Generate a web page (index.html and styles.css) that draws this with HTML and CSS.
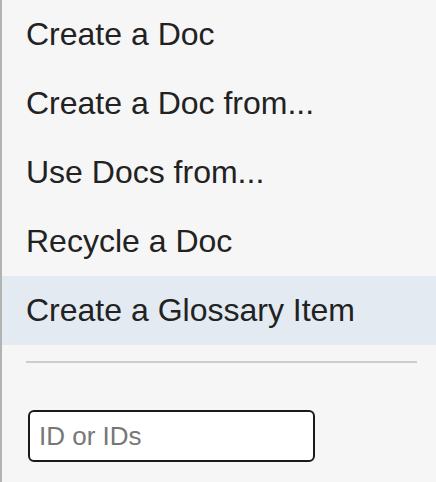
FILE: index.html
```html
<!DOCTYPE html>
<html>
<head>
<meta charset="utf-8">
<link rel="stylesheet" href="styles.css">
</head>
<body>
<div class="menu">
  <ul class="items">
    <li class="item">Create a Doc</li>
    <li class="item">Create a Doc from...</li>
    <li class="item">Use Docs from...</li>
    <li class="item">Recycle a Doc</li>
    <li class="item active">Create a Glossary Item</li>
  </ul>
  <hr class="sep">
  <div class="field">
    <input class="ids" type="text" placeholder="ID or IDs">
  </div>
</div>
</body>
</html>
```
FILE: styles.css
```css
html, body {
  margin: 0;
  padding: 0;
  background: #f6f6f6;
}
.menu {
  height: 482px;
  box-sizing: border-box;
  border-left: 2px solid #b3b3b3;
  background: #f6f6f6;
  font-family: "Liberation Sans", Arial, sans-serif;
  color: #222;
}
.items {
  list-style: none;
  margin: 0;
  padding: 0;
}
.item {
  height: 69px;
  box-sizing: border-box;
  padding: 16px 0 0 24px;
  font-size: 32px;
  line-height: 37px;
}
.active {
  background: #e3eaf1;
}
.sep {
  margin: 16px 19px 0 24px;
  border: 0;
  height: 2px;
  background: #cccccc;
}
.field {
  padding: 47px 0 0 26px;
}
.ids {
  display: block;
  width: 287px;
  height: 52px;
  box-sizing: border-box;
  border: 2px solid #1a1a1a;
  border-radius: 6px;
  background: #fff;
  padding: 0 9px;
  font-family: "Liberation Sans", Arial, sans-serif;
  font-size: 26px;
  color: #222;
  outline: none;
}
.ids::placeholder {
  color: #777;
}
```
